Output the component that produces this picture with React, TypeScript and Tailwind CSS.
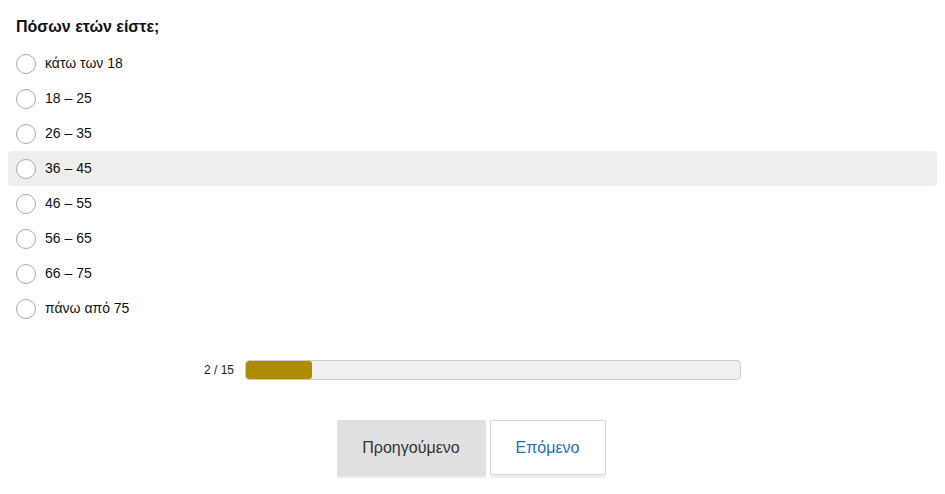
const options = ["κάτω των 18", "18 – 25", "26 – 35", "36 – 45", "46 – 55", "56 – 65", "66 – 75", "πάνω από 75"]

export default function App() {
  const current = 2
  const total = 15
  return (
    <div className="w-[945px] h-[494px] bg-white px-2 pt-[17px] font-['Liberation_Sans',Arial,sans-serif] text-[#111]">
      {/* Question */}
      <h1 className="pl-2 text-[16px] font-bold leading-[20px] mb-[9px]">Πόσων ετών είστε;</h1>
      <div className="flex flex-col">
        {options.map((o, i) => (
          <label
            key={o}
            className={`flex items-center h-[35px] pl-2 gap-[9px] rounded-[4px] text-[14px] ${i === 3 ? "bg-[#eeeeec]" : ""}`}
          >
            <span className="w-[20px] h-[20px] rounded-full border border-[#a8a8a8] bg-white shrink-0"></span>
            <span>{o}</span>
          </label>
        ))}
      </div>

      {/* Progress */}
      <div className="flex items-center justify-center gap-[11px] mt-[34px]">
        <span className="text-[12px] text-[#222]">{current} / {total}</span>
        <div className="w-[496px] h-[20px] rounded-[4px] border border-[#cccccc] bg-[#f0f0f0] overflow-hidden">
          <div className="h-full bg-[#ad8d00] rounded-[3px]" style={{ width: `${(current / total) * 100}%` }}></div>
        </div>
      </div>

      {/* Buttons */}
      <div className="flex justify-center gap-[4px] mt-[40px] pr-[3px]">
        <button className="w-[149px] h-[56px] bg-[#e0e0e0] text-[#333] text-[16px] rounded-[2px] shadow-[0_2px_0_#ececec]">
          Προηγούμενο
        </button>
        <button className="w-[116px] h-[55px] bg-white border border-[#d4d4d4] text-[#1c6fc2] text-[16px] rounded-[2px] shadow-[0_3px_0_#eeeeee]">
          Επόμενο
        </button>
      </div>
    </div>
  )
}
